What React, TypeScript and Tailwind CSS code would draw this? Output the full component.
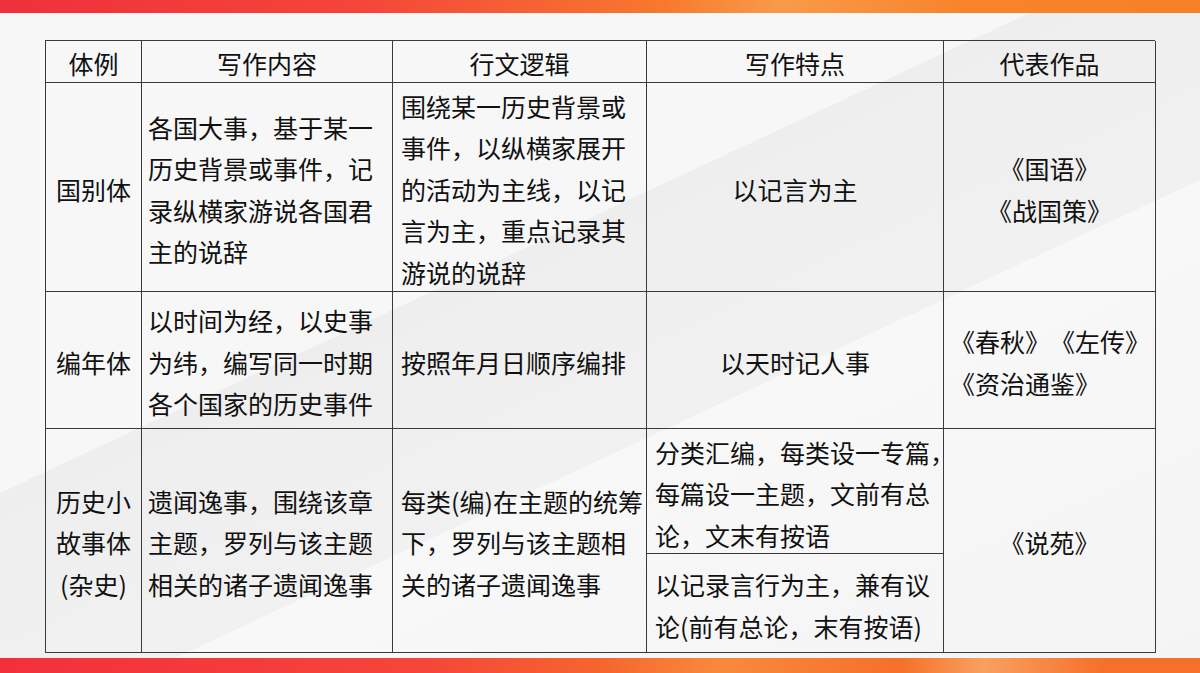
import React from 'react';

const font = { fontFamily: '"Microsoft YaHei", "Noto Sans CJK SC", "Noto Sans", sans-serif' };

// explicit line breaks keep the wrapping identical to the slide
const Lines = ({ lines }: { lines: string[] }) => (
  <div className="whitespace-nowrap">
    {lines.map((l, i) => (
      <div key={i}>{l}</div>
    ))}
  </div>
);

const cell = 'border-r border-b border-[#3a3a3a] flex items-center pt-[5px]';

const App = () => {
  return (
    <div
      className="relative w-[1200px] h-[673px] overflow-hidden flex flex-col bg-[#f3f3f3] text-[#111] text-[25px] leading-[41.5px]"
      style={font}
    >
      {/* soft diagonal background shading */}
      <div className="absolute inset-0 pointer-events-none bg-[linear-gradient(155deg,#f7f7f7_0%,#f7f7f7_40%,#eeeeee_40%,#f1f1f1_60%,#f8f8f8_60%,#f4f4f4_100%)]" />

      {/* top band */}
      <div className="relative h-[13px] shrink-0 bg-[linear-gradient(90deg,#f0303c_0%,#f5453a_30%,#f7782e_55%,#f99a4a_65%,#f7842c_80%,#f6802a_100%)]" />

      <div className="relative flex-1 pt-[27px] pl-[45px]">
        <div className="grid grid-cols-[96px_251px_254px_297px_212px] grid-rows-[42px_209px_137px_224px] w-[1110px] border-l border-t border-[#3a3a3a]">
          {/* header */}
          <div className={`${cell} justify-center`}>体例</div>
          <div className={`${cell} justify-center`}>写作内容</div>
          <div className={`${cell} justify-center`}>行文逻辑</div>
          <div className={`${cell} justify-center`}>写作特点</div>
          <div className={`${cell} justify-center`}>代表作品</div>

          {/* 国别体 */}
          <div className={`${cell} justify-center`}>国别体</div>
          <div className={`${cell} pl-[6px]`}>
            <Lines lines={['各国大事，基于某一', '历史背景或事件，记', '录纵横家游说各国君', '主的说辞']} />
          </div>
          <div className={`${cell} pl-[8px]`}>
            <Lines lines={['围绕某一历史背景或', '事件，以纵横家展开', '的活动为主线，以记', '言为主，重点记录其', '游说的说辞']} />
          </div>
          <div className={`${cell} justify-center`}>以记言为主</div>
          <div className={`${cell} justify-center text-center`}>
            <Lines lines={['《国语》', '《战国策》']} />
          </div>

          {/* 编年体 */}
          <div className={`${cell} justify-center`}>编年体</div>
          <div className={`${cell} pl-[6px]`}>
            <Lines lines={['以时间为经，以史事', '为纬，编写同一时期', '各个国家的历史事件']} />
          </div>
          <div className={`${cell} pl-[8px]`}>按照年月日顺序编排</div>
          <div className={`${cell} justify-center`}>以天时记人事</div>
          <div className={`${cell} pl-[6px]`}>
            <div className="whitespace-nowrap">
              <div className="flex">
                <span>《春秋》</span>
                <span>《左传》</span>
              </div>
              <div>《资治通鉴》</div>
            </div>
          </div>

          {/* 历史小故事体 */}
          <div className={`${cell} justify-center text-center`}>
            <Lines lines={['历史小', '故事体', '(杂史)']} />
          </div>
          <div className={`${cell} pl-[6px]`}>
            <Lines lines={['遗闻逸事，围绕该章', '主题，罗列与该主题', '相关的诸子遗闻逸事']} />
          </div>
          <div className={`${cell} pl-[8px]`}>
            <Lines lines={['每类(编)在主题的统筹', '下，罗列与该主题相', '关的诸子遗闻逸事']} />
          </div>
          <div className="border-r border-b border-[#3a3a3a] flex flex-col">
            <div className="h-[125px] border-b border-[#3a3a3a] flex items-center pl-[8px] pt-[6px]">
              <Lines lines={['分类汇编，每类设一专篇，', '每篇设一主题，文前有总', '论，文末有按语']} />
            </div>
            <div className="flex-1 flex items-center pl-[8px] pt-[5px]">
              <Lines lines={['以记录言行为主，兼有议', '论(前有总论，末有按语)']} />
            </div>
          </div>
          <div className={`${cell} justify-center`}>《说苑》</div>
        </div>
      </div>

      {/* bottom band */}
      <div className="relative h-[15px] shrink-0 bg-[linear-gradient(90deg,#f2303c_0%,#f5453a_35%,#f6652e_50%,#f88a3c_60%,#f6702a_75%,#f9a060_82%,#f5702a_92%,#f5702a_100%)]" />
    </div>
  );
};

export default App;
